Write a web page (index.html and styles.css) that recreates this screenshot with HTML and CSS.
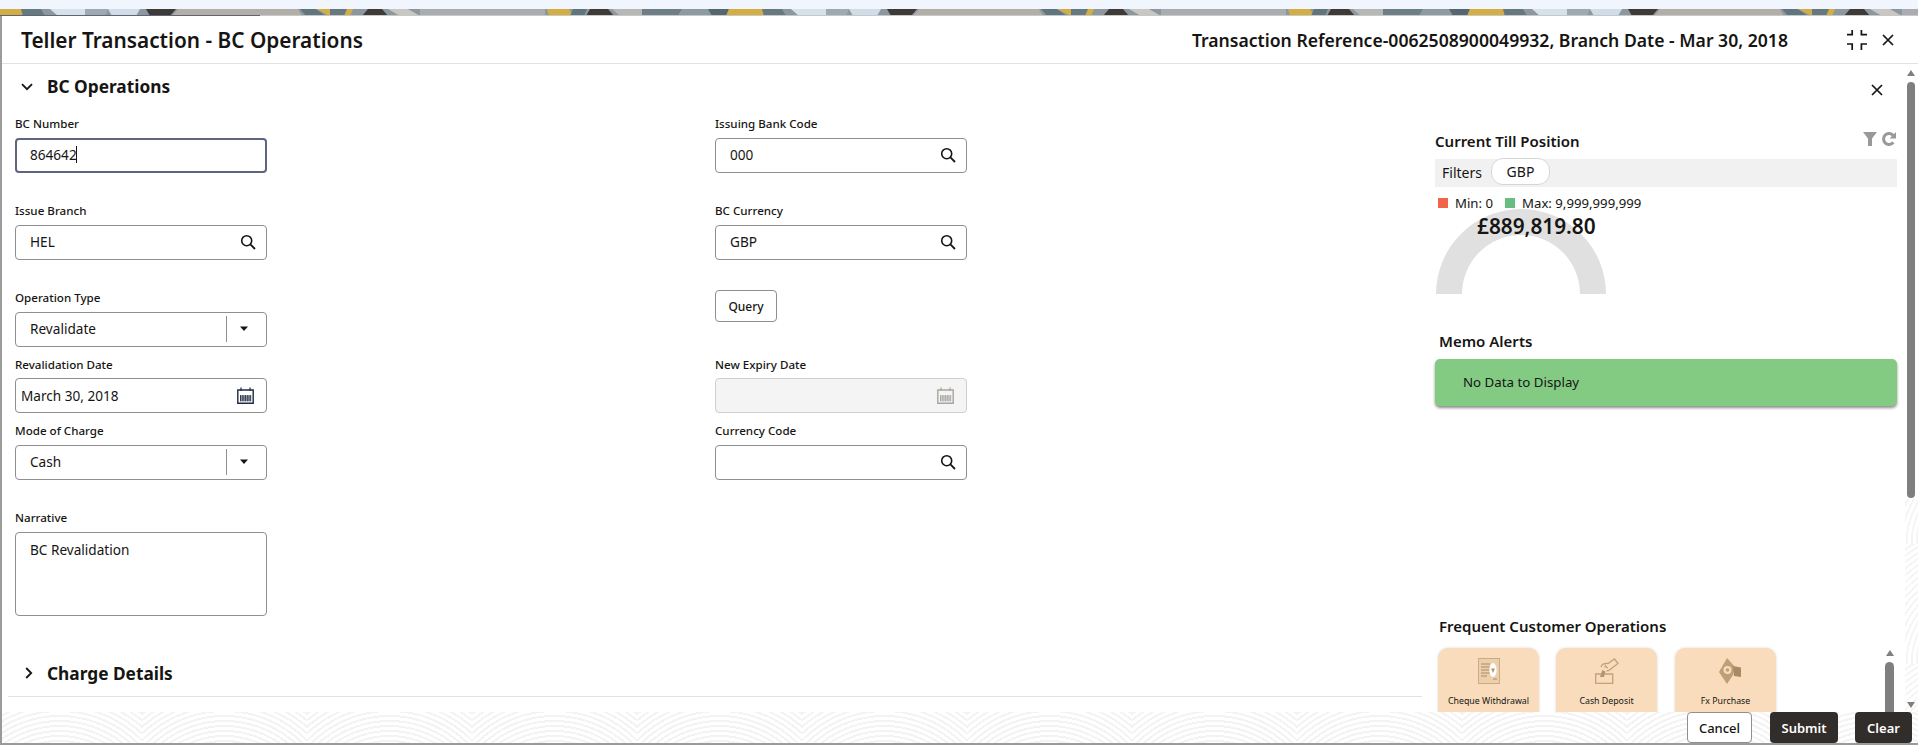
FILE: index.html
```html
<!DOCTYPE html>
<html lang="en">
<head>
<meta charset="utf-8">
<title>Teller Transaction - BC Operations</title>
<link rel="stylesheet" href="styles.css">
</head>
<body>
<svg class="defs" width="0" height="0" aria-hidden="true">
  <defs>
    <symbol id="i-search" viewBox="0 0 16 16"><circle cx="6.7" cy="6.7" r="5" fill="none" stroke="currentColor" stroke-width="1.6"/><path d="M10.4 10.4 15 15" stroke="currentColor" stroke-width="1.8" fill="none"/></symbol>
    <symbol id="i-cal" viewBox="0 0 17 17"><path d="M.8 3h15.4v13.2H.8z" fill="none" stroke="currentColor" stroke-width="1.4"/><path d="M4 .5v3.6M13 .5v3.6" stroke="currentColor" stroke-width="1.2" fill="none"/><path d="M3 8.5h11v5.6H3z" fill="currentColor" opacity=".35"/><path d="M3.5 8v6.4M5.2 8v6.4M6.9 8v6.4M8.6 8v6.4M10.3 8v6.4M12 8v6.4M13.7 8v6.4" stroke="currentColor" stroke-width=".9" fill="none"/></symbol>
    <symbol id="i-x" viewBox="0 0 12 12"><path d="M1 1l10 10M11 1 1 11" stroke="currentColor" stroke-width="1.7" fill="none"/></symbol>
    <symbol id="i-caret" viewBox="0 0 10 6"><path d="M1 .5h8L5 5z" fill="currentColor"/></symbol>
    <pattern id="strip" width="741" height="7" patternUnits="userSpaceOnUse">
      <rect width="741" height="7" fill="#8d979e"/>
      <path d="M0 0h21l2 7H0z" fill="#d2ae45"/>
      <path d="M21 0h20l4 7H23z" fill="#66797f"/>
      <path d="M50 0h35l20 7H58z" fill="#d6e1ea"/>
      <path d="M85 0h23l-3 7H85z" fill="#9eaab2"/>
      <path d="M108 0h32l-4 7h-24z" fill="#d0dde8"/>
      <path d="M146 0h30l-6 7h-20z" fill="#3d3a38"/>
      <path d="M178 0h120l4 7H172z" fill="#b2aea8"/>
      <path d="M300 0h16l10 7h-20z" fill="#61757e"/>
      <path d="M316 0h14l14 7h-14z" fill="#d2ae45"/>
      <path d="M330 0h22l-8 7h-14z" fill="#66797f"/>
      <path d="M347 0h6l-3 7h-6z" fill="#d2ae45"/>
      <path d="M368 0h14l6 7h-26z" fill="#3d3a38"/>
      <path d="M388 0h20l12 7h-20z" fill="#c9c7c2"/>
      <path d="M420 0h125v7H420z" fill="#a9adaf"/>
      <path d="M547 0h22l4 7h-24z" fill="#d2ae45"/>
      <path d="M573 0h14l-3 7h-14z" fill="#61757e"/>
      <path d="M590 0h18l6 7h-28z" fill="#3d3a38"/>
      <path d="M612 0h30v7h-22z" fill="#b5b8b4"/>
      <path d="M642 0h40l-4 7h-36z" fill="#6d7e87"/>
      <path d="M682 0h26l4 7h-34z" fill="#8e9aa1"/>
      <path d="M708 0h21l-3 7h-14z" fill="#54666f"/>
      <path d="M729 0h12v7h-15z" fill="#d2ae45"/>
    </pattern>
  </defs>
</svg>

<div class="app">
  <div class="topband"></div>
  <svg class="strip" width="1918" height="6" aria-hidden="true"><rect width="1918" height="6" fill="url(#strip)"/></svg>
  <div class="edge"></div>

  <div class="modal">
    <header class="head">
      <h1 class="title">Teller Transaction - BC Operations</h1>
      <div class="ref">Transaction Reference-0062508900049932, Branch Date - Mar 30, 2018</div>
      <svg class="collapse" width="20" height="20" viewBox="0 0 20 20" aria-hidden="true"><path d="M0 4.6h5.2V0M14.4 0v4.6H20M0 14h5.2v6M14.4 20v-6H20" fill="none" stroke="#161513" stroke-width="1.7"/></svg>
      <svg class="head-x" width="12" height="12" aria-hidden="true"><use href="#i-x"/></svg>
    </header>

    <div class="body">
      <main class="main">
        <div class="sec-head">
          <svg class="chev" width="12" height="8" viewBox="0 0 12 8" aria-hidden="true"><path d="M1 1.2 6 6.2l5-5" fill="none" stroke="#161513" stroke-width="1.8"/></svg>
          <h2 class="sec-title">BC Operations</h2>
        </div>

        <div class="form">
          <div class="field">
            <label class="lbl">BC Number</label>
            <div class="box box-focus"><span class="val">864642</span><span class="caret-bar"></span></div>
          </div>
          <div class="field">
            <label class="lbl">Issuing Bank Code</label>
            <div class="box"><span class="val">000</span><svg class="ic-search" width="16" height="16"><use href="#i-search"/></svg></div>
          </div>

          <div class="field">
            <label class="lbl">Issue Branch</label>
            <div class="box"><span class="val">HEL</span><svg class="ic-search" width="16" height="16"><use href="#i-search"/></svg></div>
          </div>
          <div class="field">
            <label class="lbl">BC Currency</label>
            <div class="box"><span class="val">GBP</span><svg class="ic-search" width="16" height="16"><use href="#i-search"/></svg></div>
          </div>

          <div class="field">
            <label class="lbl">Operation Type</label>
            <div class="box box-select"><span class="val">Revalidate</span><span class="sep"></span><svg class="ic-caret" width="10" height="6"><use href="#i-caret"/></svg></div>
          </div>
          <div class="field">
            <button class="btn-query" type="button">Query</button>
          </div>

          <div class="field">
            <label class="lbl lbl-tight">Revalidation Date</label>
            <div class="box box-date"><span class="val">March 30, 2018</span><svg class="ic-cal" width="17" height="17"><use href="#i-cal"/></svg></div>
          </div>
          <div class="field">
            <label class="lbl lbl-tight">New Expiry Date</label>
            <div class="box box-date box-off"><span class="val"></span><svg class="ic-cal" width="17" height="17"><use href="#i-cal"/></svg></div>
          </div>

          <div class="field">
            <label class="lbl">Mode of Charge</label>
            <div class="box box-select"><span class="val">Cash</span><span class="sep"></span><svg class="ic-caret" width="10" height="6"><use href="#i-caret"/></svg></div>
          </div>
          <div class="field">
            <label class="lbl">Currency Code</label>
            <div class="box"><span class="val"></span><svg class="ic-search" width="16" height="16"><use href="#i-search"/></svg></div>
          </div>

          <div class="field">
            <label class="lbl">Narrative</label>
            <div class="box box-area"><span class="val">BC Revalidation</span></div>
          </div>
        </div>

        <div class="sec-head sec-closed">
          <svg class="chev-r" width="8" height="12" viewBox="0 0 8 12" aria-hidden="true"><path d="M1.2 1 6.2 6l-5 5" fill="none" stroke="#161513" stroke-width="1.8"/></svg>
          <h2 class="sec-title">Charge Details</h2>
        </div>
      </main>

      <aside class="side">
        <div class="side-close"><svg width="12" height="12" aria-hidden="true"><use href="#i-x"/></svg></div>

        <div class="till-head">
          <h3 class="side-title">Current Till Position</h3>
          <div class="till-tools">
            <svg width="14" height="14" viewBox="0 0 14 14" aria-hidden="true"><path d="M0 0h14L9 6.5V14H5V6.5z" fill="#999"/></svg>
            <svg width="14" height="14" viewBox="0 0 14 14" aria-hidden="true"><path d="M11.4 10.4A5.5 5.5 0 1 1 11.4 3.6" fill="none" stroke="#999" stroke-width="3"/><path d="M14 0v6.5H7.5z" fill="#999"/></svg>
          </div>
        </div>

        <div class="filters"><span class="filters-lbl">Filters</span><span class="pill">GBP</span></div>

        <div class="legend">
          <i class="sq sq-min"></i><span>Min: 0</span>
          <i class="sq sq-max"></i><span>Max: 9,999,999,999</span>
        </div>

        <div class="gauge">
          <svg width="170" height="85" viewBox="0 0 170 85" aria-hidden="true"><path d="M0 85a85 85 0 0 1 170 0h-26a59 59 0 0 0-118 0z" fill="#e0e0e0"/></svg>
          <div class="amount">£889,819.80</div>
        </div>

        <h3 class="side-title sub memo-title">Memo Alerts</h3>
        <div class="memo">No Data to Display</div>

        <h3 class="side-title sub freq-title">Frequent Customer Operations</h3>
        <div class="cards">
          <div class="card">
            <svg width="22" height="26" viewBox="0 0 22 26" aria-hidden="true"><rect x=".5" y=".5" width="21" height="25" fill="#ecd0ae" stroke="#c9ab86"/><path d="M3 6h9M3 9h9M3 12h9M3 15h9M3 18h6M15 21h4" stroke="#c0a27c" stroke-width="1.3"/><ellipse cx="15" cy="12" rx="3.6" ry="7" fill="#fff"/><path d="M13 10.5h4L15 15z" fill="#b3956f"/></svg>
            <span>Cheque Withdrawal</span>
          </div>
          <div class="card">
            <svg width="24" height="26" viewBox="0 0 24 26" aria-hidden="true"><path d="M.7 16h17v9.3H.7z" fill="none" stroke="#c0a27c" stroke-width="1.3"/><path d="M5 19l2.4-7 3 1.5L9 19z" fill="#b3956f"/><path d="M6 9c1-3 4-4 7-3.5L19.500 1l3.500 4.500-6 4.500c-1.500 1.500-3.500 3-5.500 3" fill="none" stroke="#c0a27c" stroke-width="1.300"/><path d="M9 8.500l4 1.500M9.500 6l3 4" stroke="#c0a27c" stroke-width="1"/></svg>
            <span>Cash Deposit</span>
          </div>
          <div class="card">
            <svg width="22" height="26" viewBox="0 0 22 26" aria-hidden="true"><path d="M0 14 8 0l8 9-2 8-6 9z" fill="#bd9f78"/><path d="M14 8l8 1.500V19l-7-1z" fill="#a88b65"/><circle cx="8.500" cy="12" r="4" fill="#f8dcbc"/><circle cx="8.500" cy="12" r="1.800" fill="#bd9f78"/></svg>
            <span>Fx Purchase</span>
          </div>
          <div class="mini-scroll">
            <i class="tri-up"></i>
            <i class="mini-thumb"></i>
          </div>
        </div>
      </aside>

      <div class="rail">
        <i class="tri-up"></i>
        <i class="rail-thumb"></i>
        <i class="tri-down"></i>
      </div>
    </div>

    <footer class="foot">
      <button class="btn btn-line" type="button">Cancel</button>
      <button class="btn btn-dark btn-submit" type="button">Submit</button>
      <button class="btn btn-dark btn-clear" type="button">Clear</button>
    </footer>
  </div>
</div>
</body>
</html>
```
FILE: styles.css
```css
* { box-sizing: border-box; }
html, body { margin: 0; padding: 0; height: 745px; overflow: hidden; }
body { background: #f1f5fd; font-family: "Noto Sans", "Liberation Sans", sans-serif; color: #161513; }
.defs { position: absolute; }

.app { height: 745px; display: flex; flex-direction: column; }
.topband { height: 9px; flex: none; }
.strip { display: block; flex: none; }
.edge { height: 1px; flex: none; background: linear-gradient(to right, #5f6478 260px, #c8c8c8 260px); }

.modal { flex: 1; min-height: 0; display: flex; flex-direction: column; background: #fff; border-left: 2px solid #9b9b9b; border-bottom: 2px solid #9b9b9b; }

.head { flex: none; height: 48px; display: flex; align-items: center; padding: 1px 24px 0 19px; border-bottom: 1px solid #e2e2e2; }
.title { margin: 0; font-size: 20.8px; font-weight: 600; flex: 1; }
.ref { font-size: 17.6px; font-weight: 600; }
.collapse { margin-left: 59px; }
.head-x { margin-left: 15px; color: #161513; }

.body { flex: 1; min-height: 0; display: flex; overflow: hidden; }

.main { flex: none; width: 1420px; }
.sec-head { height: 46px; display: flex; align-items: center; padding: 0 0 1px 19px; }
.chev { margin-right: 14px; }
.sec-title { margin: 0; font-size: 17.3px; font-weight: 700; }
.sec-closed { height: 47px; margin: 34px 0 0 6px; padding: 0 0 0 17px; border-bottom: 1px solid #e2e2e2; }
.chev-r { margin-right: 14px; }

.form { margin-top: 6px; padding-left: 13px; display: grid; grid-template-columns: 700px 252px; grid-template-rows: 87px 87px 67px 66px 87px 106px; }
.lbl { display: block; height: 16px; line-height: 16px; margin-bottom: 6px; font-size: 11.6px; font-weight: 500; }
.lbl-tight { margin-bottom: 5px; }
.box { width: 252px; height: 35px; border: 1px solid #8f8f8f; border-radius: 4px; display: flex; align-items: center; padding: 0 14px 2px; background: #fff; }
.val { flex: 1; font-size: 13.6px; }
.box-focus { border: 2px solid #5f6480; padding: 0 13px 2px; }
.box-focus .val { flex: none; }
.caret-bar { width: 1px; height: 17px; background: #161513; margin-left: -1px; }
.ic-search { color: #161513; margin-right: -4px; }
.sep { width: 1px; height: 26px; background: #8f8f8f; }
.ic-caret { margin: 0 9px 0 12px; color: #161513; }
.box-select { padding-right: 8px; }
.box-date { padding: 0 12px 1px 5px; }
.ic-cal { color: #1f2a44; }
.box-off { background: #f4f4f4; border-color: #cfcfcf; }
.box-off .ic-cal { color: #a8a49e; }
.box-area { height: 84px; align-items: flex-start; padding-top: 7px; }
.btn-query { display: block; width: 62px; height: 32px; border: 1px solid #8f8f8f; border-radius: 4px; background: #fff; font: 500 12px "Noto Sans", sans-serif; color: #161513; padding: 0; }

.side { flex: none; width: 483px; padding: 20px 8px 0 13px; }
.side-close { height: 12px; display: flex; justify-content: flex-end; padding-right: 14px; color: #161513; }
.till-head { margin-top: 36px; height: 20px; display: flex; justify-content: space-between; align-items: flex-start; }
.side-title { margin: 0; font-size: 15px; font-weight: 600; line-height: 18px; height: 20px; }
.till-tools { display: flex; gap: 5px; padding-right: 1px; }
.filters { margin-top: 7px; height: 28px; background: #f1f1f1; display: flex; align-items: center; padding: 0 0 2px 7px; font-size: 14px; }
.filters-lbl { width: 49px; }
.pill { width: 59px; height: 27px; margin-top: -1px; background: #fff; border: 1px solid #d6d6d6; border-radius: 12px; display: flex; align-items: center; justify-content: center; }
.legend { margin-top: 8px; height: 16px; display: flex; align-items: center; padding-left: 3px; font-size: 13.2px; line-height: 16px; }
.sq { width: 10px; height: 10px; margin-right: 7px; }
.sq-min { background: #f0654a; }
.sq-max { background: #66bf80; margin-left: 12px; }
.gauge { position: relative; margin: -2px 0 0 1px; width: 170px; height: 85px; }
.gauge svg { display: block; }
.amount { position: absolute; left: 41px; top: 4px; font-size: 20.8px; font-weight: 600; line-height: 26px; white-space: nowrap; }
.sub { padding-left: 4px; }
.memo-title { margin-top: 38px; }
.memo { margin-top: 7px; height: 47px; background: #83cb83; border-radius: 5px; box-shadow: 0 2px 3px rgba(0,0,0,.45); display: flex; align-items: center; padding: 0 0 2px 28px; font-size: 13.3px; }
.freq-title { margin-top: 211px; }
.cards { margin-top: 11px; padding-left: 3px; display: flex; height: 90px; }
.card { flex: none; width: 101px; height: 90px; margin-right: 17px; border-radius: 10px; background: #f8dcbc; box-shadow: 0 0 3px rgba(0,0,0,.15); display: flex; flex-direction: column; align-items: center; font-size: 8.8px; line-height: 14px; color: #161513; white-space: nowrap; }
.card:nth-child(2) { margin-right: 18px; }
.card svg { height: 26px; margin: 10px 0 10px; }
.card:nth-child(3) svg { margin-left: 9px; }
.mini-scroll { margin-left: auto; margin-right: 3px; width: 9px; padding-top: 2px; display: flex; flex-direction: column; align-items: center; }
.tri-up { display: block; flex: none; width: 0; height: 0; border-left: 4px solid transparent; border-right: 4px solid transparent; border-bottom: 6px solid #7f7f7f; }
.tri-down { display: block; flex: none; width: 0; height: 0; border-left: 4px solid transparent; border-right: 4px solid transparent; border-top: 6px solid #7f7f7f; }
.mini-thumb { display: block; flex: none; width: 9px; height: 70px; margin-top: 6px; border-radius: 5px 5px 0 0; background: #7f7f7f; }

.rail { flex: none; width: 13px; padding: 6px 3px 4px 2px; display: flex; flex-direction: column; align-items: center;
  background:
    linear-gradient(#fff, #fff) 0 0 / 100% 435px no-repeat,
    repeating-radial-gradient(circle at 50% 100%, #f5f5f5 0 2px, #fff 2px 5px) 0 0 / 165px 120px; }
.rail-thumb { display: block; flex: none; width: 8px; height: 416px; margin-top: 6px; border-radius: 4px; background: #7f7f7f; }
.rail .tri-down { margin-top: auto; }

.foot { flex: none; height: 31px; display: flex; justify-content: flex-end; padding-right: 6px;
  background: repeating-radial-gradient(circle at 50% 110px, #f3f3f3 0 2px, #fff 2px 5px) -25px 0 / 165px 120px; }
.btn { height: 31px; border-radius: 4px; padding: 0; font: 600 13px "Noto Sans", sans-serif; }
.btn-line { width: 65px; background: #fff; border: 1px solid #8f8f8f; color: #161513; font-weight: 500; }
.btn-dark { background: #312d2a; border: 0; color: #fff; }
.btn-submit { width: 68px; margin-left: 18px; }
.btn-clear { width: 57px; margin-left: 17px; }
```
